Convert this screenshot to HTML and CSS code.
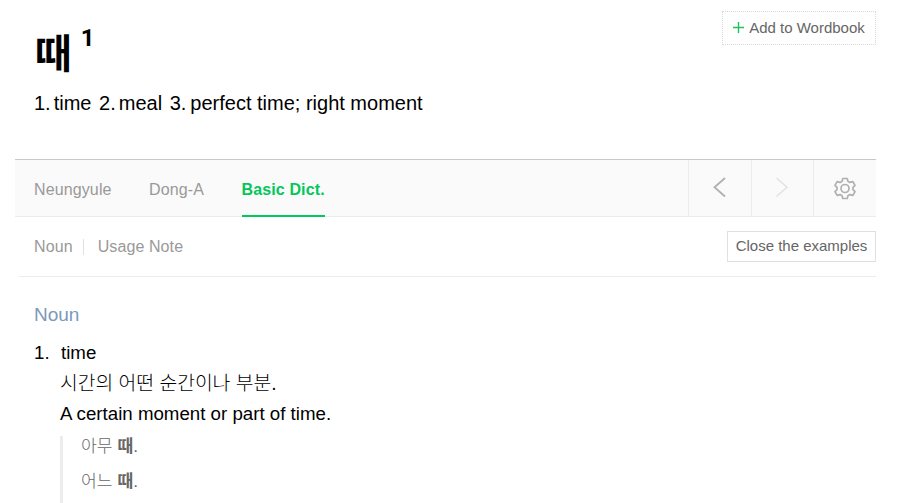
FILE: index.html
```
<!DOCTYPE html>
<html lang="en">
<head>
    <meta charset="UTF-8">
    <meta name="viewport" content="width=device-width, initial-scale=1.0">
    <title>Dictionary Entry</title>
    <link rel="stylesheet" href="styles.css">
</head>
<body>
    <div class="container">
        <header class="entry-header">
            <div class="entry-title">
                <h1 class="word"><span class="word-text" lang="ko">때</span><sup class="word-num">1</sup></h1>
                <p class="summary"><span class="num">1.</span>time <span class="num">2.</span>meal <span class="num">3.</span>perfect time; right moment</p>
            </div>
            <button type="button" class="btn-wordbook">
                <svg class="icon-plus" width="11" height="11" viewBox="0 0 11 11">
                    <path d="M5.5 0v11M0 5.5h11" stroke="#1ec35b" stroke-width="1.4"/>
                </svg>
                <span>Add to Wordbook</span>
            </button>
        </header>

        <nav class="tab-bar">
            <div class="tabs">
                <a class="tab">Neungyule</a>
                <a class="tab">Dong-A</a>
                <a class="tab active">Basic Dict.</a>
            </div>
            <div class="tools">
                <button type="button" class="tool" aria-label="Previous">
                    <svg width="14" height="22" viewBox="0 0 14 22" fill="none">
                        <path d="M12 1L1.500 10.300L12 19.500" stroke="#b0b0b0" stroke-width="1.8"/>
                    </svg>
                </button>
                <button type="button" class="tool" aria-label="Next">
                    <svg width="14" height="22" viewBox="0 0 14 22" fill="none">
                        <path d="M1.500 1L12 10.300L1.500 19.500" stroke="#e2e2e2" stroke-width="1.500"/>
                    </svg>
                </button>
                <button type="button" class="tool" aria-label="Settings">
                    <svg class="icon-gear" width="24" height="24" viewBox="0 0 24 24" fill="none" stroke="#b0b0b0" stroke-width="1.7" stroke-linejoin="round">
                        <path d="M9.800 2.500h4.400l.7 2.800 1.900 1.100 3.100-.8 2.100 3.800-2 2v2.200l2 2-2.100 3.800-3.100-.8-1.900 1.100-.7 2.800H9.800l-.7-2.800-1.900-1.100-3.100.8L2 15.600l2-2v-2.200l-2-2 2.100-3.800 3.100.8 1.900-1.100z"/>
                        <circle cx="12" cy="12.500" r="4"/>
                    </svg>
                </button>
            </div>
        </nav>

        <div class="sub-bar">
            <ul class="sub-menu">
                <li>Noun</li>
                <li>Usage Note</li>
            </ul>
            <button type="button" class="btn-examples">Close the examples</button>
        </div>

        <section class="meanings">
            <h2 class="part">Noun</h2>
            <div class="meaning">
                <span class="meaning-num">1.</span>
                <div class="meaning-body">
                    <p class="mean">time</p>
                    <p class="desc-ko" lang="ko">시간의 어떤 순간이나 부분.</p>
                    <p class="desc">A certain moment or part of time.</p>
                    <ul class="examples" lang="ko">
                        <li>아무 <strong>때</strong>.</li>
                        <li>어느 <strong>때</strong>.</li>
                    </ul>
                </div>
            </div>
        </section>
    </div>
</body>
</html>
```
FILE: styles.css
```
* {
    box-sizing: border-box;
}

body {
    margin: 0;
    background-color: #fff;
    color: #000;
    font-family: "Liberation Sans", Arial, "Noto Sans CJK KR", sans-serif;
}

h1, h2, p, ul {
    margin: 0;
    padding: 0;
}

ul {
    list-style: none;
}

button {
    font-family: inherit;
    color: #666;
    background-color: #fff;
    padding: 0;
}

.container {
    width: 861px;
    margin-left: 15px;
}

/* Word and short meanings */
.entry-header {
    display: flex;
    justify-content: space-between;
    align-items: flex-start;
    height: 159px;
    padding: 11px 0 0 19px;
}

.word {
    display: flex;
    align-items: flex-start;
    height: 80px;
    padding: 14px 0 0 1px;
    font-size: 40px;
    line-height: 52px;
}

.word-text {
    padding-top: 3px;
}

.word-num {
    margin-left: 9px;
    font-family: Roboto, Arial, sans-serif;
    font-size: 24px;
    line-height: 26px;
}

.summary {
    font-size: 20px;
    line-height: 24px;
}

.num {
    margin-right: 3px;
}

.num + .num {
    margin-left: 2px;
}

.num:last-child {
    margin-right: 4px;
}

.btn-wordbook {
    display: flex;
    align-items: center;
    justify-content: center;
    gap: 5px;
    width: 154px;
    height: 34px;
    padding-bottom: 1px;
    border: 1px dotted #d8d8d8;
    font-size: 15px;
}

/* Dictionary tabs */
.tab-bar {
    display: flex;
    justify-content: space-between;
    height: 58px;
    border-top: 1px solid #c8c8c8;
    border-bottom: 1px solid #ececec;
    background-color: #fafafa;
}

.tabs {
    display: flex;
    gap: 37.5px;
    padding-left: 19px;
}

.tab {
    height: 57px;
    color: #999;
    font-size: 16px;
    letter-spacing: 0.12px;
    line-height: 60px;
}

.tab.active {
    border-bottom: 2px solid #03c75a;
    color: #03c75a;
    font-weight: bold;
}

.tools {
    display: flex;
}

.tool {
    display: flex;
    align-items: center;
    justify-content: center;
    width: 62.7px;
    border: 0;
    border-left: 1px solid #ececec;
    background-color: transparent;
}

.sub-bar {
    display: flex;
    justify-content: space-between;
    align-items: center;
    height: 60px;
    margin-left: 4px;
    padding-left: 15px;
    border-bottom: 1px solid #ececec;
}

.sub-menu {
    display: flex;
    color: #999;
    font-size: 16px;
    letter-spacing: 0.1px;
    line-height: 16px;
}

.sub-menu li + li {
    margin-left: 10px;
    padding-left: 14px;
    border-left: 1px solid #e0e0e0;
}

.btn-examples {
    width: 149px;
    height: 31px;
    padding-bottom: 2px;
    border: 1px solid #e0e0e0;
    font-size: 15px;
}

/* Meanings */
.meanings {
    padding: 25px 0 0 19px;
}

.part {
    color: #7c98bb;
    font-size: 19px;
    font-weight: normal;
    line-height: 26px;
}

.meaning {
    display: flex;
    padding-top: 10px;
    font-size: 18.7px;
    line-height: 30px;
}

.meaning-num {
    width: 26px;
}

.mean {
    padding-left: 1px;
}

.desc-ko {
    padding-top: 1px;
    font-size: 19.3px;
    font-weight: 300;
}

.examples {
    height: 67px;
    margin-top: 7px;
    padding-left: 18px;
    border-left: 3px solid #ececec;
    color: #666;
    font-size: 17.2px;
    font-weight: 300;
    line-height: 20px;
}

.examples li + li {
    margin-top: 15px;
}

.examples strong {
    font-weight: 700;
}
```
